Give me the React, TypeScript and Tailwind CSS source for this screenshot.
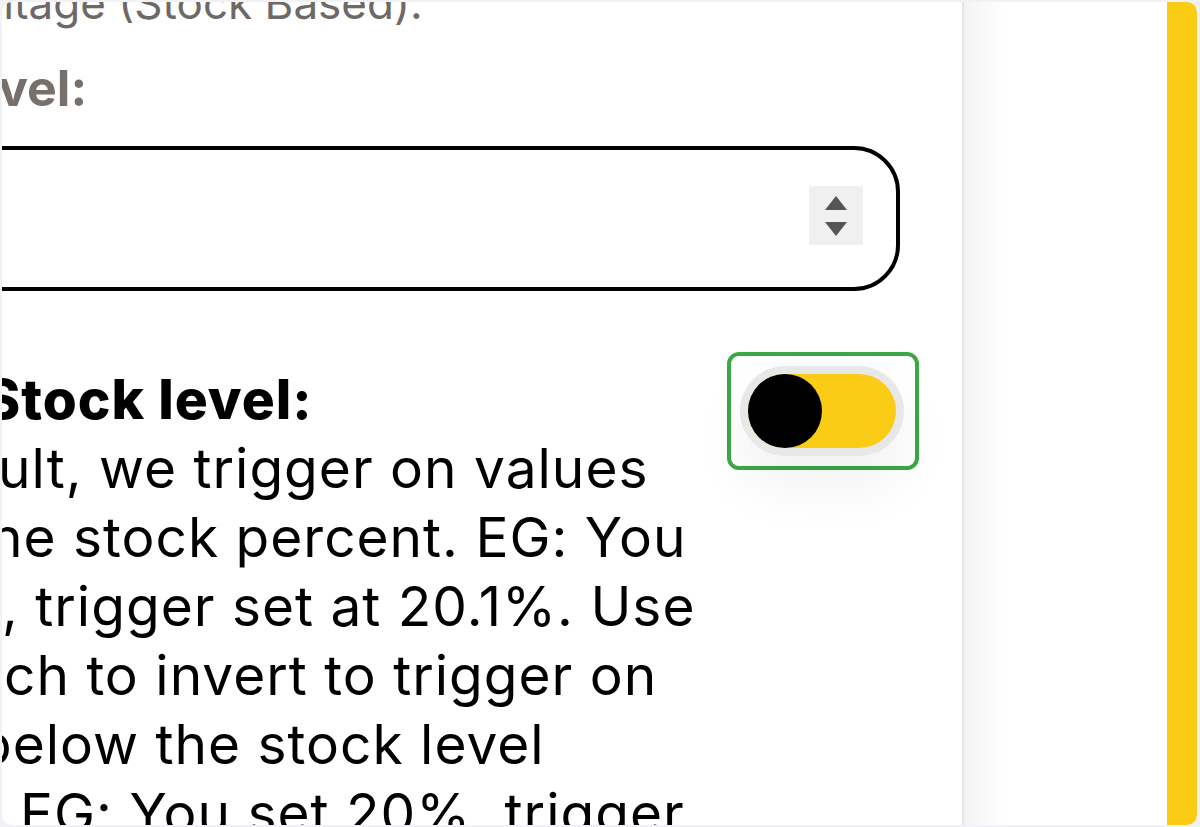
import React from "react";

const lines = [
  { text: "ult, we trigger on values", shift: "ml-[-4px]" },
  { text: "he stock percent. EG: You", shift: "ml-[-12px]" },
  { text: ", trigger set at 20.1%. Use", shift: "ml-[0px]" },
  { text: "ch to invert to trigger on", shift: "ml-[2px]" },
  { text: "below the stock level", shift: "ml-[-24px]" },
  { text: "EG: You set 20%, trigger", shift: "ml-[18px]" },
];

function Toggle() {
  return (
    <div className="rounded-[12px] border-[4px] border-[#3aa845] pl-[9px] pr-[11px] py-[10px]">
      <div className="w-[164px] h-[90px] rounded-full bg-[#e8e8e8] p-[8px] shadow-[0_30px_60px_rgba(0,0,0,0.06)]">
        <div className="w-full h-full rounded-full bg-[#facc15] flex items-center">
          <div className="w-[74px] h-[74px] rounded-full bg-black" />
        </div>
      </div>
    </div>
  );
}

export default function App() {
  return (
    <div
      className="w-[1200px] h-[827px] bg-[#f2f1f6] pt-[2px] pr-[3px] pb-[2px] pl-[2px]"
      style={{ fontFamily: "Inter, 'Noto Sans', sans-serif" }}
    >
      <div className="w-full h-full rounded-[10px] bg-white overflow-hidden flex">
        {/* form panel */}
        <div className="flex-1 overflow-hidden flex flex-col">
          <div className="mt-[-20px] ml-[-14px] text-[44px] leading-[42px] text-[#6e6966] whitespace-nowrap">
            ntage (Stock Based):
          </div>
          <div className="mt-[39px] ml-[-4px] text-[50px] leading-[50px] font-bold text-[#776f6a] whitespace-nowrap">
            vel:
          </div>

          {/* number input */}
          <div className="mt-[33px] ml-[-60px] w-[958px] h-[145px] shrink-0 rounded-[46px] border-[4px] border-black flex items-center justify-end pr-[33px]">
            <div className="mt-[-6px] w-[54px] h-[59px] bg-[#f0f0f0] flex flex-col items-center justify-center gap-[12px]">
              <svg width="22" height="14" viewBox="0 0 22 14">
                <path d="M11 0 L22 14 L0 14 Z" fill="#555" />
              </svg>
              <svg width="22" height="14" viewBox="0 0 22 14">
                <path d="M0 0 L22 0 L11 14 Z" fill="#555" />
              </svg>
            </div>
          </div>

          {/* stock level */}
          <div className="mt-[74px] flex items-start">
            <div className="w-[722px] shrink-0 text-[55px] leading-[69px] tracking-[1px] text-black whitespace-nowrap">
              <div className="ml-[-18px] font-extrabold tracking-[1px]">Stock level:</div>
              {lines.map((l, i) => (
                <div key={i} className={l.shift}>
                  {l.text}
                </div>
              ))}
            </div>
            <div className="mt-[-13px] ml-[3px]">
              <Toggle />
            </div>
          </div>
        </div>

        {/* side */}
        <div className="w-[2px] bg-[#e6e6e6]" />
        <div className="w-[203px] bg-gradient-to-r from-[#f3f3f3] via-white via-20% to-white" />
        <div className="w-[30px] bg-[#facc15]" />
      </div>
    </div>
  );
}
